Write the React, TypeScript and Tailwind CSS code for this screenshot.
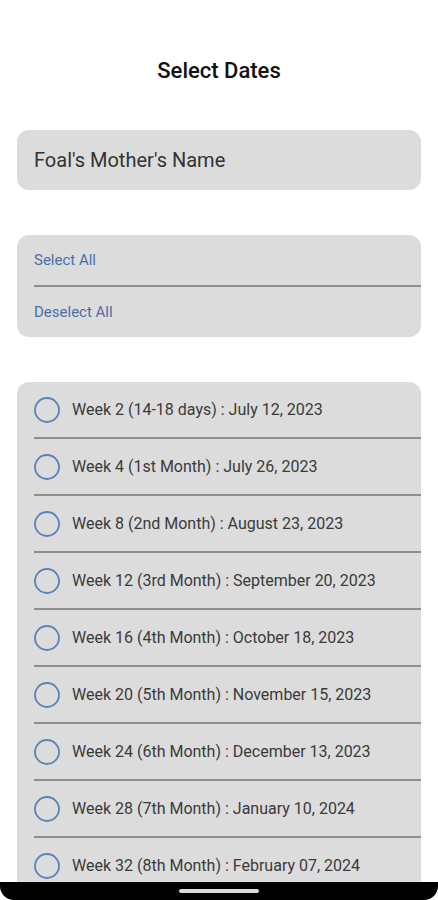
import React from "react";

const rows = [
  "Week 2 (14-18 days) : July 12, 2023",
  "Week 4 (1st Month) : July 26, 2023",
  "Week 8 (2nd Month) : August 23, 2023",
  "Week 12 (3rd Month) : September 20, 2023",
  "Week 16 (4th Month) : October 18, 2023",
  "Week 20 (5th Month) : November 15, 2023",
  "Week 24 (6th Month) : December 13, 2023",
  "Week 28 (7th Month) : January 10, 2024",
  "Week 32 (8th Month) : February 07, 2024",
];

export default function App() {
  return (
    <div
      className="relative w-[438px] h-[900px] overflow-hidden bg-white"
      style={{ fontFamily: "Roboto, 'Noto Sans', sans-serif" }}
    >
      <div className="flex flex-col px-[17px]">
        <h1 className="mt-[57px] h-[28px] text-center text-[22px] leading-[28px] font-medium text-[#111]">
          Select Dates
        </h1>
        <div className="mt-[45px] h-[60px] rounded-[12px] bg-[#dcdcdc] flex items-center px-[17px]">
          <span className="text-[20px] text-[#333] font-normal">Foal's Mother's Name</span>
        </div>
        <div className="mt-[45px] rounded-[12px] bg-[#dcdcdc] flex flex-col pl-[17px]">
          <div className="h-[52px] flex items-center border-b-2 border-[#8e8e8e]">
            <span className="text-[15px] text-[#4a6ea8]">Select All</span>
          </div>
          <div className="h-[50px] flex items-center">
            <span className="text-[15px] text-[#4a6ea8]">Deselect All</span>
          </div>
        </div>
        <div className="mt-[45px] rounded-[12px] bg-[#dcdcdc] flex flex-col pl-[17px]">
          {rows.map((r, i) => (
            <div
              key={i}
              className="h-[57px] flex items-center gap-[12px] border-b-2 border-[#8e8e8e]"
            >
              <svg width="26" height="26" viewBox="0 0 26 26" className="shrink-0">
                <circle cx="13" cy="13" r="12" fill="none" stroke="#5a82b8" strokeWidth="1.8" />
              </svg>
              <span className="text-[16px] text-[#3a3a3a]">{r}</span>
            </div>
          ))}
        </div>
      </div>
      <div className="absolute left-0 right-0 bottom-0 h-[18px] bg-black rounded-b-[14px] flex items-center justify-center">
        <div className="w-[80px] h-[4px] rounded-full bg-[#dcdcdc]" />
      </div>
    </div>
  );
}
